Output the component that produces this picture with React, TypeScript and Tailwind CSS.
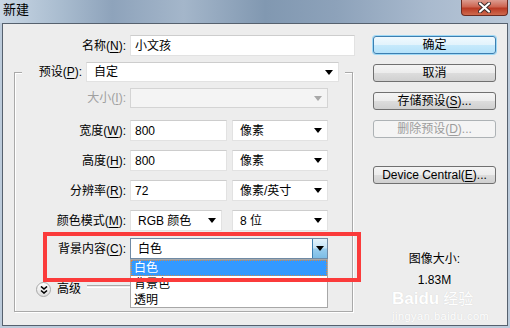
import React from "react";

const FONT = "font-['Liberation_Sans','Noto_Sans_CJK_SC',sans-serif]";

function Caret({ disabled }: { disabled?: boolean }) {
    return (
        <svg width="8" height="5" viewBox="0 0 8 5" className="shrink-0">
            <path d="M0 0h8L4 5z" fill={disabled ? "#a8a8a8" : "#000"} />
        </svg>
    );
}

function Label({ children, w, disabled }: { children: React.ReactNode; w: string; disabled?: boolean }) {
    return (
        <div className={`${w} shrink-0 text-right pr-[4px] text-[12px] leading-none ${disabled ? "text-[#a0a0a0]" : "text-black"}`}>
            {children}
        </div>
    );
}

function Key({ k }: { k: string }) {
    return <span className="underline underline-offset-2">{k}</span>;
}

function TextBox({ value, w }: { value: string; w: string }) {
    return (
        <div className={`${w} h-[21px] shrink-0 flex items-center bg-white border border-[#e2e2e2] border-t-[#cdcdcd] pl-[4px] text-[12px]`}>
            {value}
        </div>
    );
}

function Select({ value, w, disabled, h = "h-[21px]" }: { value: string; w: string; disabled?: boolean; h?: string }) {
    return (
        <div
            className={`${w} ${h} shrink-0 flex items-center justify-between border pl-[7px] pr-[5px] text-[12px] ${
                disabled ? "bg-[#f4f4f4] border-[#d4d4d4]" : "bg-white border-[#e2e2e2] border-t-[#cdcdcd]"
            }`}
        >
            <span>{value}</span>
            <Caret disabled={disabled} />
        </div>
    );
}

function Button({ children, primary, disabled }: { children: React.ReactNode; primary?: boolean; disabled?: boolean }) {
    let look = "border-[#707070] bg-[linear-gradient(180deg,#f4f4f4_0%,#ececec_48%,#dcdcdc_52%,#d0d0d0_100%)] text-black";
    if (primary)
        look = "border-[#3c7fb1] bg-[linear-gradient(180deg,#f0f9fe_0%,#e2f3fc_48%,#c6e9fb_52%,#b5e2fa_100%)] text-black shadow-[0_0_0_1px_#9fd9f6]";
    if (disabled) look = "border-[#adb2b5] bg-[#f4f4f4] text-[#9c9c9c]";
    return (
        <div className={`w-[123px] h-[18px] rounded-[3px] border flex items-center justify-center text-[12px] leading-none ${look}`}>
            {children}
        </div>
    );
}

function MoreToggle() {
    return (
        <div className="w-[15px] h-[15px] rounded-full border border-[#a8a8a8] bg-[linear-gradient(180deg,#ffffff,#dedede)] flex items-center justify-center">
            <svg width="8" height="8" viewBox="0 0 8 8">
                <path d="M1 0.5L4 3L7 0.5M1 4.5L4 7L7 4.5" stroke="#000" strokeWidth="1.6" fill="none" />
            </svg>
        </div>
    );
}

export default function App() {
    return (
        <div className={`relative w-[510px] h-[328px] overflow-hidden bg-[#bccbdb] ${FONT}`}>
            {/* Title bar */}
            <div className="h-[23px] flex items-start justify-between bg-[linear-gradient(90deg,#c9d7e5_0%,#a9bccf_12%,#8ea3bb_22%,#a4b6ca_36%,#8198b1_52%,#8da2ba_66%,#a9bace_84%,#b9c8d8_100%)]">
                <span className="pl-[3px] pt-[3px] text-[13px] leading-none text-black">新建</span>
                <div className="mr-[2px] w-[47px] h-[16px] rounded-b-[4px] border border-t-0 border-[#6b2b22] bg-[linear-gradient(180deg,#dc9c90_0%,#cd6551_45%,#b93a24_55%,#cf6a4e_100%)] flex items-center justify-center">
                    <svg width="13" height="11" viewBox="0 0 13 11">
                        <path d="M2 1.5L11 9.5M11 1.5L2 9.5" stroke="#3a2a2a" strokeWidth="4" strokeLinecap="round" />
                        <path d="M2 1.5L11 9.5M11 1.5L2 9.5" stroke="#fff" strokeWidth="2.2" strokeLinecap="round" />
                    </svg>
                </div>
            </div>

            {/* Client area */}
            <div className="mx-[2px] h-[303px] border border-[#56616e] bg-[#ededed] flex">
                {/* Form column */}
                <div className="w-[358px] shrink-0">
                    <div className="mt-[11px] flex items-center">
                        <Label w="w-[127px]">
                            名称(<Key k="N" />):
                        </Label>
                        <TextBox value="小文孩" w="w-[225px]" />
                    </div>

                    <div className="relative mt-[16px] ml-[11px] w-[339px] border border-[#a9a9a9] shadow-[1px_1px_0_#ffffff,inset_1px_1px_0_#ffffff] pb-[15px]">
                        <div className="-mt-[11px] mx-[7px] bg-[#ededed] flex items-center h-[20px]">
                            <Label w="w-[64px]">
                                预设(<Key k="P" />):
                            </Label>
                            <Select value="自定" w="w-[253px]" h="h-[20px]" />
                        </div>

                        <div className="mt-[6px] flex items-center">
                            <Label w="w-[115px]" disabled>
                                大小(<Key k="I" />):
                            </Label>
                            <Select value="" w="w-[198px]" h="h-[20px]" disabled />
                        </div>

                        <div className="mt-[12px] flex items-center">
                            <Label w="w-[115px]">
                                宽度(<Key k="W" />):
                            </Label>
                            <TextBox value="800" w="w-[97px]" />
                            <div className="ml-[5px]">
                                <Select value="像素" w="w-[96px]" />
                            </div>
                        </div>

                        <div className="mt-[9px] flex items-center">
                            <Label w="w-[115px]">
                                高度(<Key k="H" />):
                            </Label>
                            <TextBox value="800" w="w-[97px]" />
                            <div className="ml-[5px]">
                                <Select value="像素" w="w-[96px]" />
                            </div>
                        </div>

                        <div className="mt-[9px] flex items-center">
                            <Label w="w-[115px]">
                                分辨率(<Key k="R" />):
                            </Label>
                            <TextBox value="72" w="w-[97px]" />
                            <div className="ml-[5px]">
                                <Select value="像素/英寸" w="w-[96px]" />
                            </div>
                        </div>

                        <div className="mt-[9px] flex items-center">
                            <Label w="w-[115px]">
                                颜色模式(<Key k="M" />):
                            </Label>
                            <Select value="RGB 颜色" w="w-[92px]" />
                            <div className="ml-[10px]">
                                <Select value="8 位" w="w-[96px]" />
                            </div>
                        </div>

                        <div className="mt-[7px] flex items-center">
                            <Label w="w-[115px]">
                                背景内容(<Key k="C" />):
                            </Label>
                            <div className="relative">
                                <div className="w-[198px] h-[21px] flex items-center border border-[#6f8aa5] bg-white text-[12px]">
                                    <span className="flex-1 pl-[7px]">白色</span>
                                    <div className="w-[15px] h-full border-l border-[#3c7fb1] bg-[linear-gradient(180deg,#e3f3fc_0%,#c4e4f7_48%,#98cdee_52%,#7cbde6_100%)] flex items-center justify-center">
                                        <Caret />
                                    </div>
                                </div>
                                {/* open list */}
                                <div className="absolute left-0 top-full z-10 w-[198px] h-[49px] bg-white border border-[#a7a7a7] text-[12px] leading-none">
                                    <div className="h-[16px] flex items-center pl-[3px] bg-[#3399ff] text-white outline outline-1 outline-dotted outline-[#d08a4a] -outline-offset-1">
                                        白色
                                    </div>
                                    <div className="h-[16px] flex items-center pl-[3px]">背景色</div>
                                    <div className="h-[16px] flex items-center pl-[3px]">透明</div>
                                </div>
                            </div>
                        </div>

                        <div className="mt-[23px] ml-[21px] flex items-start h-[14px]">
                            <MoreToggle />
                            <span className="ml-[6px] mt-[1px] text-[12px] leading-none">高级</span>
                            <div className="ml-[6px] mt-[3px] w-[50px] h-[2px] border-t border-[#a9a9a9] shadow-[0_1px_0_#ffffff]" />
                        </div>
                    </div>
                </div>

                {/* Buttons column */}
                <div className="ml-[12px] pt-[12px] flex flex-col">
                    <Button primary>确定</Button>
                    <div className="mt-[10px]">
                        <Button>取消</Button>
                    </div>
                    <div className="mt-[10px]">
                        <Button>
                            存储预设(<Key k="S" />)...
                        </Button>
                    </div>
                    <div className="mt-[10px]">
                        <Button disabled>
                            删除预设(<Key k="D" />)...
                        </Button>
                    </div>
                    <div className="mt-[28px]">
                        <Button>
                            Device Central(<Key k="E" />)...
                        </Button>
                    </div>
                    <div className="mt-[69px] w-[123px] text-center text-[12px] leading-none">图像大小:</div>
                    <div className="mt-[9px] w-[123px] text-center text-[12px] leading-none">1.83M</div>
                </div>
            </div>

            {/* Annotation */}
            <div className="absolute left-[43px] top-[232px] w-[318px] h-[50px] border-[4px] border-[#fb3b3b] z-20" />

            {/* Watermark */}
            <div className="absolute left-[392px] top-[290px] z-20 pointer-events-none text-white [text-shadow:0_0_1px_#cfcfcf]">
                <div className="flex items-baseline gap-[4px]">
                    <span className="text-[17px] font-bold leading-none">Baidu</span>
                    <span className="text-[15px] leading-none">经验</span>
                </div>
                <div className="mt-[4px] text-[11px] leading-none tracking-[0.5px]">jingyan.baidu.com</div>
            </div>
        </div>
    );
}
